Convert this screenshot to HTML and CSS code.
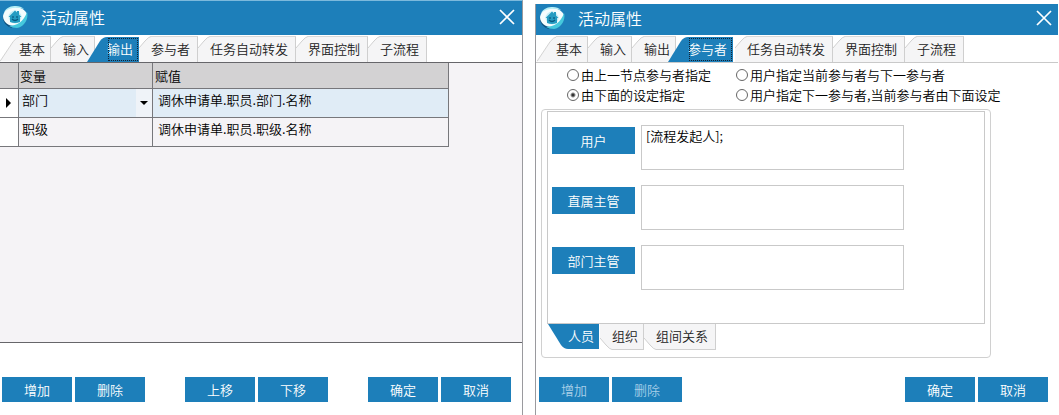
FILE: index.html
```html
<!DOCTYPE html>
<html lang="zh-CN">
<head>
<meta charset="utf-8">
<title>活动属性</title>
<link rel="stylesheet" href="styles.css">
</head>
<body>
<svg class="defs" aria-hidden="true">
  <symbol id="logo" viewBox="0 0 26 24">
    <path d="M1 10c-1 6 3 12 10 13-5-3-8-7-10-13Z" fill="#0c4f7c"/>
    <path d="M1 11C2 5 7 2 13 2c6 0 10 3 12 7-2 8-7 12-12 12C6 21 1 17 1 11Z" fill="#f4fcfd"/>
    <path d="M2 7C5 2 9 1 14 1c3 0 6 1 8 3-7-2-14-2-20 3Z" fill="#b4eef5"/>
    <path d="M25 7c2 7-3 15-10 16-3 0-6-1-8-2 8 0 15-5 18-14Z" fill="#45c8dc"/>
    <circle cx="13" cy="12" r="6.500" fill="#c6edf6"/>
    <path d="m6.500 12 6.500-6.500 2 2V6h2v3.500l2.500 2.500H18v5q-5 2-10 0v-5Z" fill="#259cc2"/>
    <path d="M11 11v2m4-2v2m-5 1q3 3 6 0" fill="none" stroke="#08587f" stroke-width="1.200"/>
  </symbol>
  <symbol id="slope-long" viewBox="0 0 20 26">
    <path d="M0 26 14 5Q18 .5 20 .5V26Z" fill="#f5f5f6"/>
    <path d="M0 26 14 5Q18 .5 20 .5" fill="none" stroke="#d0d0d0"/>
  </symbol>
  <symbol id="slope-short" viewBox="0 0 12 26">
    <path d="M0 12 6 5Q10 .5 12 .5V26H0Z" fill="#f5f5f6"/>
    <path d="M0 12 6 5Q10 .5 12 .5" fill="none" stroke="#d0d0d0"/>
  </symbol>
  <symbol id="slope-active" viewBox="0 0 20 26">
    <path d="M0 26 13 5Q16 1 20 1V26Z" fill="#1d7fba"/>
  </symbol>
  <symbol id="close" viewBox="0 0 16 16">
    <path d="m1 1 14 14M15 1 1 15" fill="none" stroke="#fff" stroke-width="1.7"/>
  </symbol>
</svg>

<section class="dialog dialog-output">
  <header class="titlebar">
    <svg class="logo"><use href="#logo"/></svg>
    <h1 class="title">活动属性</h1>
    <button class="close" aria-label="关闭"><svg><use href="#close"/></svg></button>
  </header>
  <nav class="tabs">
    <button class="tab tab-first"><svg class="slope"><use href="#slope-long"/></svg><span class="tab-label">基本</span></button>
    <button class="tab"><svg class="slope"><use href="#slope-short"/></svg><span class="tab-label">输入</span></button>
    <button class="tab tab-active"><svg class="slope"><use href="#slope-active"/></svg><span class="tab-label">输出</span></button>
    <button class="tab tab-wide"><svg class="slope"><use href="#slope-short"/></svg><span class="tab-label">参与者</span></button>
    <button class="tab tab-wide"><svg class="slope"><use href="#slope-short"/></svg><span class="tab-label">任务自动转发</span></button>
    <button class="tab tab-wide"><svg class="slope"><use href="#slope-short"/></svg><span class="tab-label">界面控制</span></button>
    <button class="tab tab-wide"><svg class="slope"><use href="#slope-short"/></svg><span class="tab-label">子流程</span></button>
  </nav>
  <main class="grid-panel">
    <table class="grid">
      <colgroup><col class="col-mark"><col class="col-var"><col class="col-value"></colgroup>
      <thead><tr><th></th><th>变量</th><th>赋值</th></tr></thead>
      <tbody>
        <tr class="current">
          <td class="mark"><svg class="pointer" viewBox="0 0 5 10"><path d="M0 0 5 5 0 10Z"/></svg></td>
          <td class="combo-cell"><div class="combo"><select class="combo-select" aria-label="变量"><option>部门</option><option>职级</option></select><span class="combo-arrow"><svg viewBox="0 0 8 4"><path d="M0 0H8L4 4Z"/></svg></span></div></td>
          <td class="value">调休申请单.职员.部门.名称</td>
        </tr>
        <tr><td class="mark"></td><td>职级</td><td class="value">调休申请单.职员.职级.名称</td></tr>
      </tbody>
    </table>
  </main>
  <footer class="footer">
    <div class="group"><button class="btn">增加</button><button class="btn">删除</button></div>
    <div class="group"><button class="btn">上移</button><button class="btn">下移</button></div>
    <div class="group"><button class="btn">确定</button><button class="btn">取消</button></div>
  </footer>
</section>

<section class="dialog dialog-people">
  <header class="titlebar">
    <svg class="logo"><use href="#logo"/></svg>
    <h1 class="title">活动属性</h1>
    <button class="close" aria-label="关闭"><svg><use href="#close"/></svg></button>
  </header>
  <nav class="tabs">
    <button class="tab tab-first"><svg class="slope"><use href="#slope-long"/></svg><span class="tab-label">基本</span></button>
    <button class="tab"><svg class="slope"><use href="#slope-short"/></svg><span class="tab-label">输入</span></button>
    <button class="tab"><svg class="slope"><use href="#slope-short"/></svg><span class="tab-label">输出</span></button>
    <button class="tab tab-wide tab-active"><svg class="slope"><use href="#slope-active"/></svg><span class="tab-label">参与者</span></button>
    <button class="tab tab-wide"><svg class="slope"><use href="#slope-short"/></svg><span class="tab-label">任务自动转发</span></button>
    <button class="tab tab-wide"><svg class="slope"><use href="#slope-short"/></svg><span class="tab-label">界面控制</span></button>
    <button class="tab tab-wide"><svg class="slope"><use href="#slope-short"/></svg><span class="tab-label">子流程</span></button>
  </nav>
  <main class="people">
    <div class="radios">
      <label class="radio"><input type="radio" name="mode">由上一节点参与者指定</label>
      <label class="radio"><input type="radio" name="mode">用户指定当前参与者与下一参与者</label>
      <label class="radio"><input type="radio" name="mode" checked>由下面的设定指定</label>
      <label class="radio"><input type="radio" name="mode">用户指定下一参与者,当前参与者由下面设定</label>
    </div>
    <div class="frame">
      <div class="fields">
        <div class="field"><button class="btn btn-field" id="pick-user">用户</button><textarea class="box" aria-labelledby="pick-user">[流程发起人];</textarea></div>
        <div class="field"><button class="btn btn-field" id="pick-lead">直属主管</button><textarea class="box" aria-labelledby="pick-lead"></textarea></div>
        <div class="field"><button class="btn btn-field" id="pick-dept">部门主管</button><textarea class="box" aria-labelledby="pick-dept"></textarea></div>
      </div>
      <nav class="tabs tabs-bottom">
        <button class="tab tab-first tab-active"><svg class="slope"><use href="#slope-active"/></svg><span class="tab-label">人员</span></button>
        <button class="tab"><svg class="slope"><use href="#slope-short"/></svg><span class="tab-label">组织</span></button>
        <button class="tab tab-wide"><svg class="slope"><use href="#slope-short"/></svg><span class="tab-label">组间关系</span></button>
      </nav>
    </div>
  </main>
  <footer class="footer">
    <div class="group"><button class="btn" disabled>增加</button><button class="btn" disabled>删除</button></div>
    <div class="group"><button class="btn">确定</button><button class="btn">取消</button></div>
  </footer>
</section>
</body>
</html>
```
FILE: styles.css
```css
* { box-sizing: border-box; }

body {
  margin: 0;
  min-height: 100vh;
  padding-right: 1px;
  display: grid;
  grid-template-columns: 1fr 1fr;
  gap: 12px;
  background: #fff;
  color: #000;
  font: 350 13px/20px "Noto Sans CJK SC", sans-serif;
}

button, select, textarea { font: inherit; color: inherit; margin: 0; }
button { border: 0; padding: 0; background: none; }
.defs { position: absolute; width: 0; height: 0; }

.dialog { display: flex; flex-direction: column; min-width: 0; }
.dialog-output { border-top: 1px solid #7cb9dc; border-right: 1px solid #9a9a9e; }
.dialog-people { margin-top: 4px; border-left: 1px solid #9a9a9e; }

/* Title bar */
.titlebar {
  display: flex;
  align-items: center;
  height: 34px;
  padding: 0 7px 2px 2px;
  background: #1d7fba;
}
.dialog-people .titlebar { height: 31px; padding: 0 6px 4px 3px; }
.logo { width: 26px; height: 24px; }
.title { flex: 1; margin: 0 0 0 13px; color: #fff; font-size: 16px; font-weight: 350; line-height: 24px; }
.close { display: flex; }
.close svg { width: 16px; height: 16px; }

/* Tab strips */
.tabs { display: flex; height: 28px; padding-top: 1px; border-bottom: 1px solid #66666a; }
.dialog-people .tabs { border-bottom-color: #c9c9c9; }
.dialog-people > .tabs { padding-left: 1px; }
.tab { display: flex; height: 26px; color: #222; }
.slope { flex: none; width: 12px; height: 26px; }
.tab-first .slope { width: 19px; }
.tab-label {
  height: 26px;
  padding-right: 5px;
  border-top: 1px solid #d8d8d8;
  border-right: 1px solid #cfcfcf;
  background: #f5f5f6;
  line-height: 24px;
}
.tab-wide .tab-label { padding-right: 7px; }
.tab-active .slope { width: 20px; margin-left: -8px; }
.tab-active .tab-label {
  height: 25px;
  margin-top: 1px;
  border: 0;
  background: #1d7fba;
  color: #fff;
  outline: 1px dotted #123;
  outline-offset: -2px;
  padding-right: 6px;
}
.tab-active { position: relative; }
.tab-wide.tab-active { margin-right: 2px; }

.dialog-people .tabs-bottom { height: 26px; padding: 0 0 0 1px; border: 0; }
.tabs-bottom .slope { transform: scaleY(-1); }
.tabs-bottom .tab-label { border-top: 0; border-bottom: 1px solid #d0d0d0; line-height: 24px; }
.tabs-bottom .tab-first .slope { width: 20px; margin-left: 0; }
.tabs-bottom .tab-active { margin-right: 1px; }
.tabs-bottom .tab-active .tab-label { margin: 0; border: 0; outline: 0; padding-right: 5px; }

/* Variable grid */
.grid-panel { flex: 1; border-bottom: 1px solid #66666a; background: #f5f3f6; }
.grid { border-collapse: separate; border-spacing: 0; table-layout: fixed; width: 86%; }
.col-mark { width: 19px; }
.col-var { width: 134px; }
.grid th, .grid td {
  height: 29px;
  padding: 0 0 6px 3px;
  border: solid #77777b;
  border-width: 0 1px 1px 0;
  text-align: left;
  font-weight: 350;
  line-height: 20px;
}
.grid th { height: 26px; padding: 0 0 0 1px; background: #d3d2d3; }
.grid th:last-child { padding-left: 2px; }
.grid .value { padding-left: 5px; }
.grid .mark { padding: 0 0 0 6px; background: #fff; }
.grid .current { background: #e0ecf6; }
.pointer { display: block; width: 5px; height: 10px; }
.grid .combo-cell { padding: 0; }
.combo { display: flex; height: 28px; }
.combo-select {
  flex: 1;
  min-width: 0;
  appearance: none;
  border: 0;
  padding: 0 0 6px 3px;
  background: transparent;
}
.combo-arrow { display: flex; align-items: center; justify-content: center; width: 16px; background: #eff3f8; }
.combo-arrow svg { width: 8px; height: 4px; }

/* Participants */
.people { flex: 1; padding: 2px 67px 0 5px; }
.radios { display: grid; grid-template-columns: 169px 1fr; padding: 0 0 4px 26px; }
.radio { display: flex; align-items: center; gap: 2px; height: 20px; white-space: nowrap; }
.radio input {
  appearance: none;
  width: 12px;
  height: 12px;
  margin: 0;
  border: 1px solid #666;
  border-radius: 50%;
  background: #fff;
}
.radio input:checked { background: radial-gradient(circle, #333 1px, #fff 3px); }
.frame { padding: 1px 5px 7px; border: 1px solid #d0d0d0; border-radius: 4px; }
.fields { display: grid; gap: 15px; padding: 13px 80px 33px 4px; border: 1px solid #c9c9c9; }
.field { display: flex; gap: 6px; }
.box {
  flex: 1;
  min-width: 0;
  height: 45px;
  padding: 0 4px;
  border: 1px solid #c9c9c9;
  background: #fff;
  resize: none;
  overflow: hidden;
}

/* Buttons */
.footer { display: flex; justify-content: space-between; padding: 34px 11px 13px 2px; }
.dialog-people .footer { padding: 0 10px 13px 3px; }
.group { display: flex; gap: 3px; }
.btn { width: 70px; height: 25px; background: #1d7fba; color: #fff; }
.btn:disabled { color: #a8cfe8; }
.btn-field { width: 83px; height: 27px; margin-top: 2px; }
```
